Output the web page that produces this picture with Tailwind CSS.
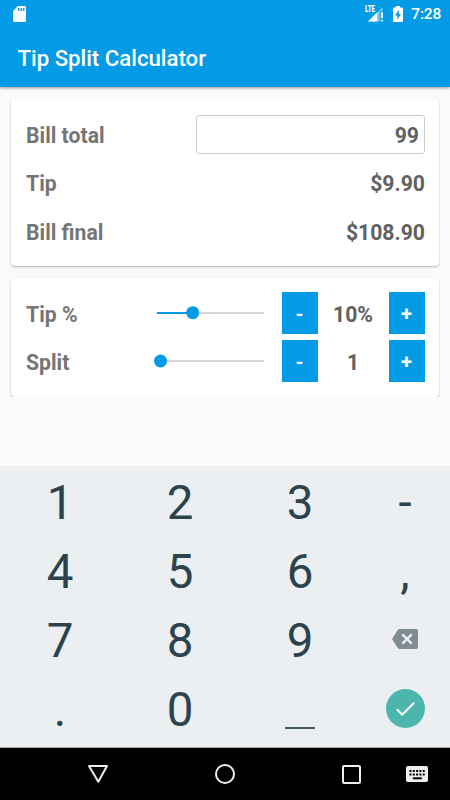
<!DOCTYPE html>
<html lang="en">
  <head>
    <meta charset="UTF-8" />
    <meta name="viewport" content="width=device-width, initial-scale=1.0" />
    <title>Tip Split Calculator</title>
    <script src="https://cdn.jsdelivr.net/npm/@tailwindcss/browser@4"></script>
  </head>
  <body class="bg-[#fafafa] font-['Roboto',sans-serif]">
    <div class="flex h-[800px] w-[450px] flex-col overflow-hidden">
      <!-- Header -->
      <header class="relative h-[87px] shrink-0 bg-[#039be5] text-white shadow-[0_1px_3px_rgba(0,0,0,0.4)]">
        <!-- Status bar -->
        <div class="flex h-[27px] items-center justify-between pr-[9px] pl-[13px]">
          <svg class="h-4 w-[13px]" viewBox="0 0 13 16" fill="none">
            <path d="M5 0h6.6Q13 0 13 1.4v13.2q0 1.4-1.4 1.4H1.4Q0 16 0 14.6V5z" fill="#fff" />
            <path d="M5.8 2v3M8.3 2v3M10.8 2v3" stroke="#039be5" stroke-width="1.4" />
          </svg>
          <div class="flex items-center">
            <div class="relative mr-[9px] h-4 w-5">
              <svg class="absolute top-0 left-0 h-4 w-5" viewBox="0 0 20 16">
                <path d="M4 15.6 18.6 1v4.300h-2.300v10.300z" fill="#fff" fill-opacity=".4" />
                <path d="M4 15.6 13.300 6.300v9.300z" fill="#fff" />
                <path d="M17.200 6.300H19v6h-1.800zM17.200 13.800H19v1.800h-1.800z" fill="#fff" />
              </svg>
              <span class="absolute top-[-1px] left-[1px] origin-left scale-x-[0.68] text-[9px] leading-[9px] font-black">LTE</span>
            </div>
            <svg class="mr-[8px] h-4 w-[10px]" viewBox="0 0 10 16">
              <path d="M3 0h4v1.600h2q1 0 1 1V15q0 1-1 1H1q-1 0-1-1V2.600q0-1 1-1h2z" fill="#fff" />
              <path d="M5.800 3.800 2 9.500h2.300v4.200L8 8H5.800z" fill="#039be5" />
            </svg>
            <span class="text-[15.500px] leading-4 font-medium tracking-[-0.2px]">7:28</span>
          </div>
        </div>
        <h1 class="pt-[17px] pl-[17.500px] text-[22.200px] leading-7 font-medium">Tip Split Calculator</h1>
      </header>

      <main class="flex h-[379px] shrink-0 flex-col px-[11px] pt-[12px] text-[21.200px] font-bold text-[#757575]">
        <!-- Totals -->
        <section class="h-[167px] rounded-[4px] bg-white pt-[12px] pr-[14px] pl-[15px] shadow-[0_1px_2px_rgba(0,0,0,0.3)]">
          <div class="flex h-[47px] items-center justify-between">
            <span class="pt-[3px]">Bill total</span>
            <div class="flex h-[39px] w-[229px] items-center justify-end rounded-[3px] border border-[#cccccc] pt-[3px] pr-[5px] text-[#616161]">99</div>
          </div>
          <div class="flex h-[49px] items-center justify-between pt-[2px]">
            <span>Tip</span>
            <span class="text-[#616161]">$9.90</span>
          </div>
          <div class="flex h-12 items-center justify-between pt-[3px]">
            <span>Bill final</span>
            <span class="text-[#616161]">$108.90</span>
          </div>
        </section>

        <!-- Controls -->
        <div class="-mx-[4px] h-[131px] overflow-hidden px-[4px] pt-[12px]">
          <section class="flex h-[119px] flex-col gap-[6px] rounded-[4px] bg-white pt-[14px] pr-[14px] pl-[15px] shadow-[0_1px_2px_rgba(0,0,0,0.3)]">
            <div class="flex h-[42px] items-center">
              <span class="w-[126px] pt-[3px]">Tip %</span>
              <svg class="h-4 w-[112px]" viewBox="0 0 112 16">
                <path d="M5 8h107" stroke="#d6d6d6" stroke-width="2" />
                <path d="M5 8h36" stroke="#039be5" stroke-width="2" />
                <circle cx="40.700" cy="7.700" r="6.500" fill="#039be5" />
              </svg>
              <button class="ml-[17.500px] h-[42px] w-[36px] bg-[#039be5] pt-[2px] text-[20px] text-white">-</button>
              <span class="w-[71px] pt-[3px] text-center text-[#616161]">10%</span>
              <button class="h-[42px] w-[36px] bg-[#039be5] pt-[2px] text-[20px] text-white">+</button>
            </div>
            <div class="flex h-[42px] items-center">
              <span class="w-[126px] pt-[4px]">Split</span>
              <svg class="h-4 w-[112px]" viewBox="0 0 112 16">
                <path d="M8 8h104" stroke="#d6d6d6" stroke-width="2" />
                <circle cx="8.500" cy="8" r="6.500" fill="#039be5" />
              </svg>
              <button class="ml-[17.500px] h-[42px] w-[36px] bg-[#039be5] pt-[2px] text-[20px] text-white">-</button>
              <span class="w-[71px] pt-[4px] text-center text-[#616161]">1</span>
              <button class="h-[42px] w-[36px] bg-[#039be5] pt-[2px] text-[20px] text-white">+</button>
            </div>
          </section>
        </div>
      </main>

      <!-- Keyboard -->
      <div class="h-[282px] shrink-0 border-b border-[#a0a3a5] bg-[#eceff1]">
        <div class="h-1 border-t border-[#ececec] bg-[#f1f2f3]"></div>
        <div class="-mt-[1px] grid h-[275px] grid-cols-[120px_120px_120px_90px] grid-rows-4 place-items-center text-[47.500px] leading-[60px] text-[#2c434d]">
          <span>1</span>
          <span>2</span>
          <span>3</span>
          <span>-</span>
          <span>4</span>
          <span>5</span>
          <span>6</span>
          <span>,</span>
          <span>7</span>
          <span>8</span>
          <span>9</span>
          <svg class="mb-[4px] h-5 w-[26px]" viewBox="0 0 26 20">
            <path d="M7.500 0h16.700Q26 0 26 1.800v16.400q0 1.800-1.800 1.800H7.500q-1 0-1.700-1L0 10l5.800-9q.7-1 1.700-1z" fill="#7f8c91" />
            <path d="m10.300 5.300 9.400 9.400m0-9.400-9.400 9.400" stroke="#eceff1" stroke-width="2.400" />
          </svg>
          <span>.</span>
          <span>0</span>
          <div class="mt-[36px] h-[2px] w-[30px] bg-[#455a64]"></div>
          <div class="mb-[2px] flex h-[39px] w-[39px] items-center justify-center rounded-full bg-[#4db6ac]">
            <svg class="h-[14px] w-[19px]" viewBox="0 0 19 14" fill="none" stroke="#fff" stroke-width="2">
              <path d="m.8 7.300 5.400 5.400L18.200.8" />
            </svg>
          </div>
        </div>
      </div>

      <!-- Navigation bar -->
      <nav class="flex h-[52px] shrink-0 items-center bg-black pl-[88px]">
        <svg class="h-[18px] w-5" viewBox="0 0 20 18" fill="none" stroke="#eee" stroke-width="2" stroke-linejoin="round">
          <path d="M1 1h18L10.300 16.800z" />
        </svg>
        <svg class="ml-[107px] h-5 w-5" viewBox="0 0 20 20" fill="none" stroke="#eee" stroke-width="2">
          <circle cx="10" cy="10" r="9" />
        </svg>
        <svg class="ml-[107px] h-[19px] w-[19px]" viewBox="0 0 19 19" fill="none" stroke="#eee" stroke-width="2">
          <rect x="1" y="1" width="17" height="17" rx="1" />
        </svg>
        <svg class="ml-[45px] h-4 w-[22px]" viewBox="0 0 22 16">
          <rect width="22" height="16" rx="1.800" fill="#eee" />
          <path d="M3.500 5h16M3.500 8.500h16" stroke="#000" stroke-width="2" stroke-dasharray="2 1.300" />
          <path d="M6.800 12.300h9" stroke="#000" stroke-width="2" />
        </svg>
      </nav>
    </div>
  </body>
</html>
